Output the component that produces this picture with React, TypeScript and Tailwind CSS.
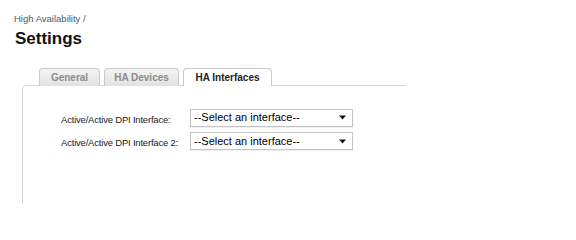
import React from "react";

function Tab({ label, active, w }: { label: string; active?: boolean; w: string }) {
  return (
    <div
      className={
        "h-[18px] rounded-t-[4px] border border-b-0 border-[#c9c9c9] flex items-center justify-center text-[10px] font-bold -mb-px relative " +
        w +
        (active
          ? " bg-white text-[#222222]"
          : " bg-gradient-to-b from-[#f4f4f4] to-[#e2e2e2] text-[#8c8c8c]")
      }
      style={{ fontFamily: '"Liberation Sans", Arial, sans-serif' }}
    >
      {label}
    </div>
  );
}

function Select() {
  return (
    <div className="w-[163px] h-[18px] border border-[#c4c4c4] bg-white flex items-center justify-between pl-[3px] pr-[6px] shadow-[0_1px_1px_rgba(0,0,0,0.06)]">
      <span className="text-[11px] text-black leading-none" style={{ fontFamily: '"Liberation Sans", Arial, sans-serif' }}>
        --Select an interface--
      </span>
      <svg width="7" height="5" viewBox="0 0 7 5">
        <path d="M0 0.5H7L3.5 4.5Z" fill="#111" />
      </svg>
    </div>
  );
}

export default function App() {
  return (
    <div className="w-[576px] h-[232px] bg-white overflow-hidden" style={{ fontFamily: '"Liberation Sans", Arial, sans-serif' }}>
      <div className="pl-[14px] pt-[13px]">
        <div className="text-[9.5px] text-[#465778] leading-[12px]">High Availability /</div>
        <div className="text-[17px] font-bold text-[#111111] leading-[20px] mt-[4px] pl-px">Settings</div>
      </div>
      <div className="pl-[39px] mt-[19px] flex gap-[4px] relative z-10">
        <Tab label="General" w="w-[61px]" />
        <Tab label="HA Devices" w="w-[75px]" />
        <Tab label="HA Interfaces" w="w-[89px]" active />
      </div>
      <div className="ml-[22px] w-[384px] h-[119px] border-l border-t border-[#d6d6d6] rounded-tl-[5px] pt-[22px]">
        <div className="flex flex-col gap-[5px]">
          <div className="flex items-center">
            <div className="w-[167px] pl-[38px] pt-[5px] text-[9.5px] tracking-[-0.2px] text-[#222]">Active/Active DPI Interface:</div>
            <Select />
          </div>
          <div className="flex items-center">
            <div className="w-[167px] pl-[38px] pt-[3px] text-[9.5px] tracking-[-0.2px] text-[#222]">Active/Active DPI Interface 2:</div>
            <Select />
          </div>
        </div>
      </div>
    </div>
  );
}
